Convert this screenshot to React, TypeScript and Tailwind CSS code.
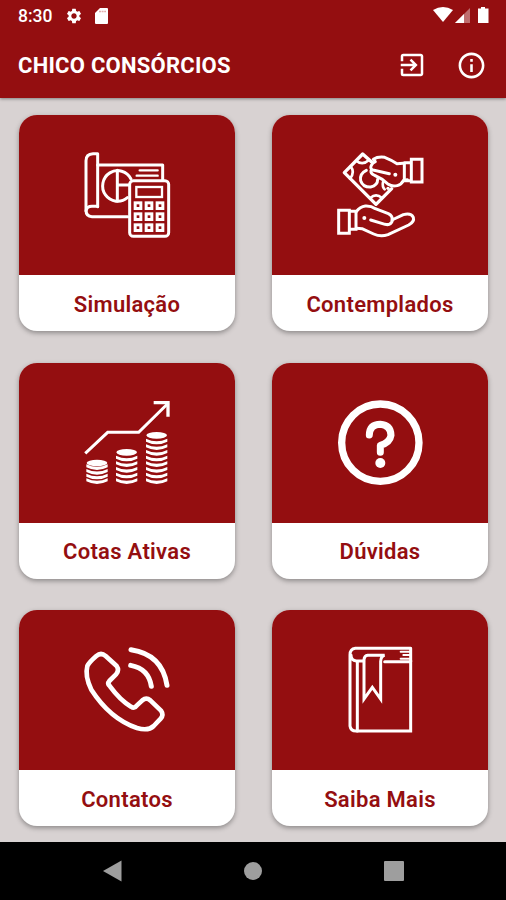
import type { ReactNode } from "react";
import { MdExitToApp, MdInfoOutline, MdSettings } from "react-icons/md";

function Drawing({ viewBox, children }: { viewBox: string; children: ReactNode }) {
  return (
    <svg
      viewBox={viewBox}
      className="size-[110px]"
      fill="none"
      stroke="#fff"
      strokeWidth={9}
      strokeLinejoin="round"
      strokeLinecap="round"
    >
      {children}
    </svg>
  );
}

function CalculatorIcon() {
  return (
    <Drawing viewBox="0 0 330 330">
      <path d="M77 200V41H63Q42 42 42 62V211Q42 230 60 230H167" />
      <path d="M42 213Q44 199 60 199H77" />
      <path d="M77 75H272V119" />
      <path d="M177 117A45 46 0 1 0 166 173" />
      <path d="M136 91V183M136 135H170" />
      <path d="M203 91H257M194 107H257" strokeWidth={7} />
      <rect x="173" y="122" width="117" height="167" rx="11" />
      <rect x="193" y="141" width="77" height="30" strokeWidth={7} strokeLinejoin="miter" />
      {[197, 230, 263].map((y) =>
        [198, 231, 264].map((x) => (
          <rect key={`${x}-${y}`} x={x - 8.5} y={y - 8.5} width="17" height="17" strokeWidth={9} strokeLinejoin="miter" />
        )),
      )}
    </Drawing>
  );
}

function HandsIcon() {
  return (
    <Drawing viewBox="0 0 330 330">
      <path d="M140 66L113 42L58 98L153 193L200 146" strokeWidth={10} />
      <path d="M94 62Q112 78 132 60M77 79Q91 97 75 116M136 174Q153 158 171 174" strokeWidth={8} />
      <path d="M124 91Q103 101 107 122Q114 142 137 141Q158 137 158 118" />
      <path d="M174 126Q171 140 179 148" strokeWidth={8} />
      <path d="M193 101L144 90Q134 87 139 76Q142 69 151 65L145 58Q159 49 179 52Q199 60 216 71L234 70M138 92Q136 101 149 106L172 118L190 133Q201 141 217 137Q229 134 236 121L247 119" />
      <path d="M238 68V122H259V58H291V126H259V120M238 68H259" strokeLinejoin="miter" />
      <circle cx="211" cy="104" r="6" fill="#fff" stroke="none" />
      <circle cx="189" cy="145" r="5" fill="#fff" stroke="none" />
      <path d="M41 211H73V280H41ZM73 214H93V268H73" strokeLinejoin="miter" />
      <path d="M94 215Q105 200 121 198Q138 197 151 206L190 221Q204 228 201 240L235 224Q258 218 265 232Q269 245 251 255L189 284Q167 292 146 282L111 266L95 265" />
      <path d="M137 240L180 253Q198 257 202 242" />
      <circle cx="118" cy="234" r="6" fill="#fff" stroke="none" />
    </Drawing>
  );
}

const coinStacks = [
  { x: 75, top: 219, layers: 4, step: 14 },
  { x: 164, top: 187, layers: 5, step: 17 },
  { x: 254, top: 136, layers: 8, step: 17 },
];

function GrowthIcon() {
  return (
    <Drawing viewBox="0 -6 330 330">
      <path d="M43 187L107 127H200L286 42" strokeLinecap="square" strokeLinejoin="miter" />
      <path d="M245 38H288V80" strokeWidth={10} strokeLinecap="butt" strokeLinejoin="miter" />
      {coinStacks.map(({ x, top, layers, step }) => (
        <g key={x} fill="#fff" stroke="none">
          <ellipse cx={x} cy={top} rx="31" ry="10" />
          {Array.from({ length: layers }, (_, i) => {
            const y = 270 - i * step;
            return <path key={i} d={`M${x - 32} ${y - 5}Q${x} ${y + 10} ${x + 32} ${y - 5}V${y + 4}Q${x} ${y + 20} ${x - 32} ${y + 4}Z`} />;
          })}
        </g>
      ))}
    </Drawing>
  );
}

function QuestionIcon() {
  return (
    <Drawing viewBox="0 -6 330 330">
      <circle cx="166" cy="158" r="116" strokeWidth={22} />
      <path d="M133 135Q134 103 166 103Q197 105 198 136Q195 158 166 166V187" strokeWidth={21} strokeLinecap="round" />
      <circle cx="166" cy="219" r="15" fill="#fff" stroke="none" />
    </Drawing>
  );
}

function PhoneIcon() {
  return (
    <Drawing viewBox="0 -2 330 330">
      <path
        d="M73 61Q87 49 101 61L134 91Q143 104 132 116L112 136Q105 144 114 152Q144 193 177 213Q187 220 194 210L211 194Q223 184 235 194L267 225Q276 238 266 249L245 271Q229 287 195 277Q114 249 58 162Q38 121 46 91Q51 80 73 61Z"
        strokeWidth={14}
      />
      <path d="M177 42Q271 56 285 149M176 89Q230 99 238 152" strokeWidth={15} />
    </Drawing>
  );
}

function BookIcon() {
  return (
    <Drawing viewBox="0 -2 330 330">
      <path d="M257 38H91Q75 40 75 58V271Q77 286 93 286H257V78H179M116 76H94Q78 74 78 58" strokeLinejoin="miter" />
      <path d="M97 79V286" />
      <path d="M257 39V78" />
      <path d="M117 190V72Q118 60 128 59H179Q168 61 167 77V190L142 155Z" strokeLinejoin="miter" />
      <path d="M227 48H255M235 58H255M227 69H255" strokeWidth={6} />
    </Drawing>
  );
}

const cards = [
  { label: "Simulação", icon: <CalculatorIcon /> },
  { label: "Contemplados", icon: <HandsIcon /> },
  { label: "Cotas Ativas", icon: <GrowthIcon /> },
  { label: "Dúvidas", icon: <QuestionIcon /> },
  { label: "Contatos", icon: <PhoneIcon /> },
  { label: "Saiba Mais", icon: <BookIcon /> },
];

export default function App() {
  return (
    <div className="flex h-[900px] w-[506px] flex-col overflow-hidden bg-[#d8d2d2] font-[Roboto,sans-serif]">
      <header className="z-10 h-[98px] shrink-0 bg-[#940e10] text-white shadow-[0_1px_3px_rgba(0,0,0,0.4)]">
        <div className="flex h-8 items-center pr-[16px] pl-[18px]">
          <span className="w-[47px] text-[17.5px] leading-8 font-medium">8:30</span>
          <MdSettings className="size-[18px]" />
          <svg viewBox="0 0 13 16" className="ml-[12px] h-4 w-[13px]" fill="#fff">
            <path d="M5 0H12Q13 0 13 1V15Q13 16 12 16H1Q0 16 0 15V5Z" />
            <path d="M4 3.5H11" stroke="#e3adad" strokeWidth="1.6" strokeDasharray="2 .6" />
          </svg>
          <svg viewBox="0 0 58 18" className="ml-auto h-[18px] w-[58px]" fill="#fff">
            <path d="M1 3Q11 -3 21 3L11 15Z" />
            <path d="M23 16L38 1V16Z" fillOpacity="0.4" />
            <path d="M23 16L32 7V16Z" />
            <path d="M46 1.500H49V0H53V1.500H56.500V16H46Z" />
          </svg>
        </div>
        <div className="flex h-[66px] items-center pr-[19px] pl-[18px]">
          <h1 className="pt-[2px] text-[22px] leading-none font-bold tracking-[0.25px]">CHICO CONSÓRCIOS</h1>
          <MdExitToApp className="ml-auto size-[30px]" />
          <MdInfoOutline className="ml-[29px] size-[31px]" />
        </div>
      </header>
      <main className="grid min-h-0 flex-1 grid-cols-[216px_216px] content-start gap-x-[37px] gap-y-[31.5px] pt-[17px] pl-[19px]">
        {cards.map(({ label, icon }) => (
          <section
            key={label}
            className="flex h-[216px] flex-col overflow-hidden rounded-[18px] bg-white shadow-[0_2px_5px_rgba(0,0,0,0.35)]"
          >
            <div className="flex h-[160px] shrink-0 items-center justify-center bg-[#940e10]">{icon}</div>
            <h2 className="flex flex-1 items-center justify-center pt-[2px] text-[22px] font-semibold tracking-[0.3px] text-[#940e10]">{label}</h2>
          </section>
        ))}
      </main>
      <nav className="z-10 flex h-[58px] shrink-0 items-center justify-between bg-black pr-[102px] pl-[102px]">
        <svg viewBox="0 0 20 22" className="h-[22px] w-[20px]" fill="#9e9e9e">
          <path d="M1 11L19.500 .5V21.500Z" />
        </svg>
        <div className="size-[18px] rounded-full bg-[#9e9e9e]" />
        <div className="size-[20px] rounded-[1px] bg-[#9e9e9e]" />
      </nav>
    </div>
  );
}
